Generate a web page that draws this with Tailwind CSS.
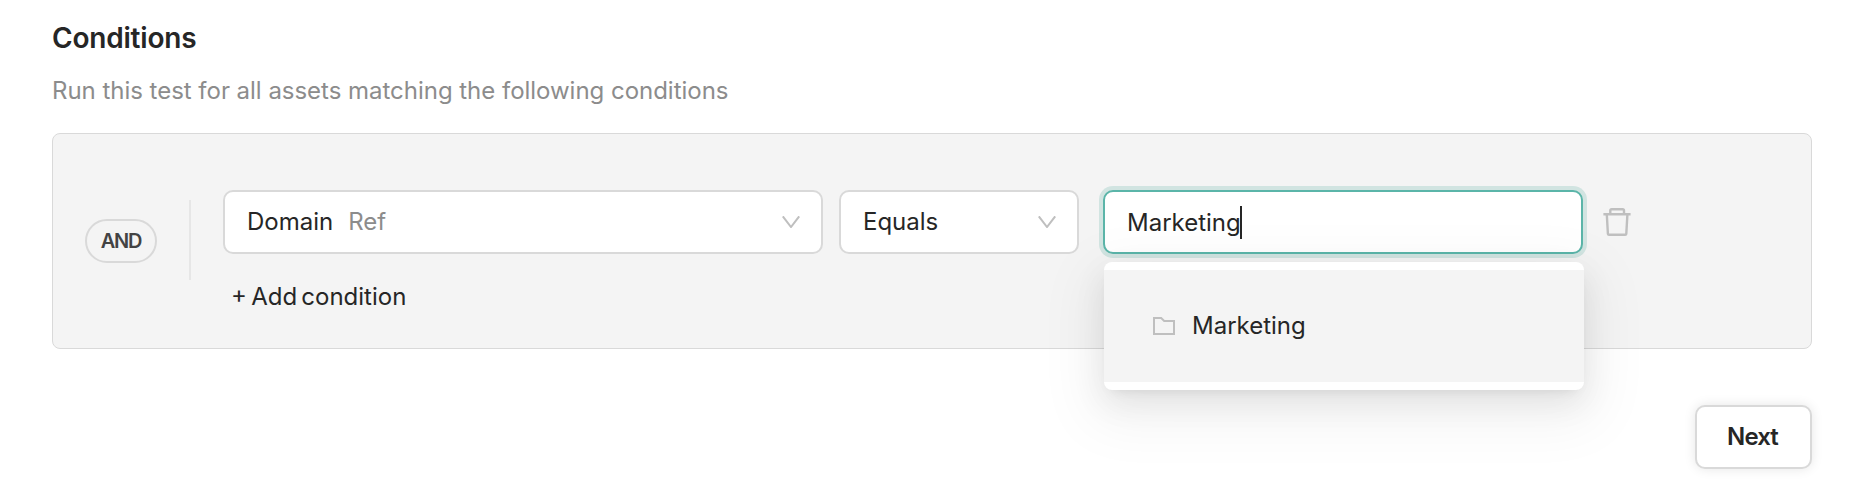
<!DOCTYPE html>
<html lang="en">
<head>
<meta charset="utf-8">
<title>Conditions</title>
<script src="https://cdn.jsdelivr.net/npm/@tailwindcss/browser@4"></script>
</head>
<body class="h-[494px] overflow-hidden bg-white font-['Inter','Liberation_Sans',sans-serif] text-2xl text-[#262626]">
<main class="flex w-[1812px] flex-col pt-[19px] pl-[52px]">
  <header>
    <h2 class="text-[28px] leading-[38px] font-semibold tracking-[-0.2px]">Conditions</h2>
    <p class="mt-[18px] leading-8 tracking-[-0.025px] text-[#8c8c8c]">Run this test for all assets matching the following conditions</p>
  </header>

  <section class="mt-[26px] flex h-[216px] rounded-lg border border-[#d9d9d9] bg-[#f4f4f4] pl-8">
    <div class="flex h-full items-center">
      <span class="flex h-11 w-[72px] items-center justify-center rounded-[22px] border-2 border-[#d9d9d9] text-xl font-semibold tracking-[-1.2px] text-[#434343]">AND</span>
      <span class="ml-8 -mt-0.5 h-20 w-0.5 bg-[#e6e6e6]"></span>
    </div>

    <div class="ml-8 flex flex-col pt-14">
      <div class="flex items-center">
        <div class="flex h-16 w-[600px] items-center rounded-[10px] border-2 border-[#d9d9d9] bg-white pr-[21px] pl-[22px]">
          <span>Domain</span>
          <span class="ml-[15px] text-[#8c8c8c]">Ref</span>
          <svg class="ml-auto h-3 w-[18px]" viewBox="0 0 18 12" fill="none" stroke="#bfbfbf" stroke-width="2"><path d="M.8 .3 9 11 17.2 .3"/></svg>
        </div>
        <div class="ml-4 flex h-16 w-60 items-center rounded-[10px] border-2 border-[#d9d9d9] bg-white pr-[21px] pl-[22px]">
          <span>Equals</span>
          <svg class="ml-auto h-3 w-[18px]" viewBox="0 0 18 12" fill="none" stroke="#bfbfbf" stroke-width="2"><path d="M.8 .3 9 11 17.2 .3"/></svg>
        </div>
        <div class="relative ml-6 h-16 w-[480px]">
          <div class="flex h-full items-center rounded-[10px] border-2 border-[#5bb5a9] bg-white pl-[22px] ring-4 ring-[#d1e4e1]">
            <span class="pt-0.5">Marketing</span>
            <span class="-ml-px h-[33px] w-0.5 bg-[#262626]"></span>
          </div>
          <div class="absolute top-[72px] left-px z-10 w-[480px] rounded-lg bg-white py-2 shadow-[0_6px_12px_-8px_rgba(0,0,0,0.12),0_12px_32px_0_rgba(0,0,0,0.08),0_18px_56px_16px_rgba(0,0,0,0.05)]">
            <div class="flex h-28 items-center bg-[#f4f4f4] pl-[49px]">
              <svg class="h-[18px] w-[22px]" viewBox="0 0 22 18" fill="none" stroke="#bfbfbf" stroke-width="2"><path d="M1 1h7.2l3 3H21v13H1z"/></svg>
              <span class="ml-[17px]">Marketing</span>
            </div>
          </div>
        </div>
        <svg class="ml-5 h-7 w-7" viewBox="0 0 28 28" fill="none" stroke="#bfbfbf" stroke-width="2.4" stroke-linejoin="round"><path d="M.4 6.2h27.2M7.3 6V2.5Q7.3 1.2 8.6 1.2H19.6Q21 1.2 21 2.5V6M3.8 6.5 4.9 25.8Q5 26.8 6 26.8H22.2Q23.2 26.8 23.3 25.8L24.4 6.5"/></svg>
      </div>
      <div class="mt-[27px] ml-2 leading-8 [word-spacing:-2.5px]">+ Add condition</div>
    </div>
  </section>

  <button class="mt-14 flex h-16 w-[117px] items-center justify-center self-end rounded-[10px] border-2 border-[#d9d9d9] bg-white pr-0.5 font-semibold tracking-[-0.9px] shadow-[0_0_12px_rgba(0,0,0,0.1)]">Next</button>
</main>
</body>
</html>
